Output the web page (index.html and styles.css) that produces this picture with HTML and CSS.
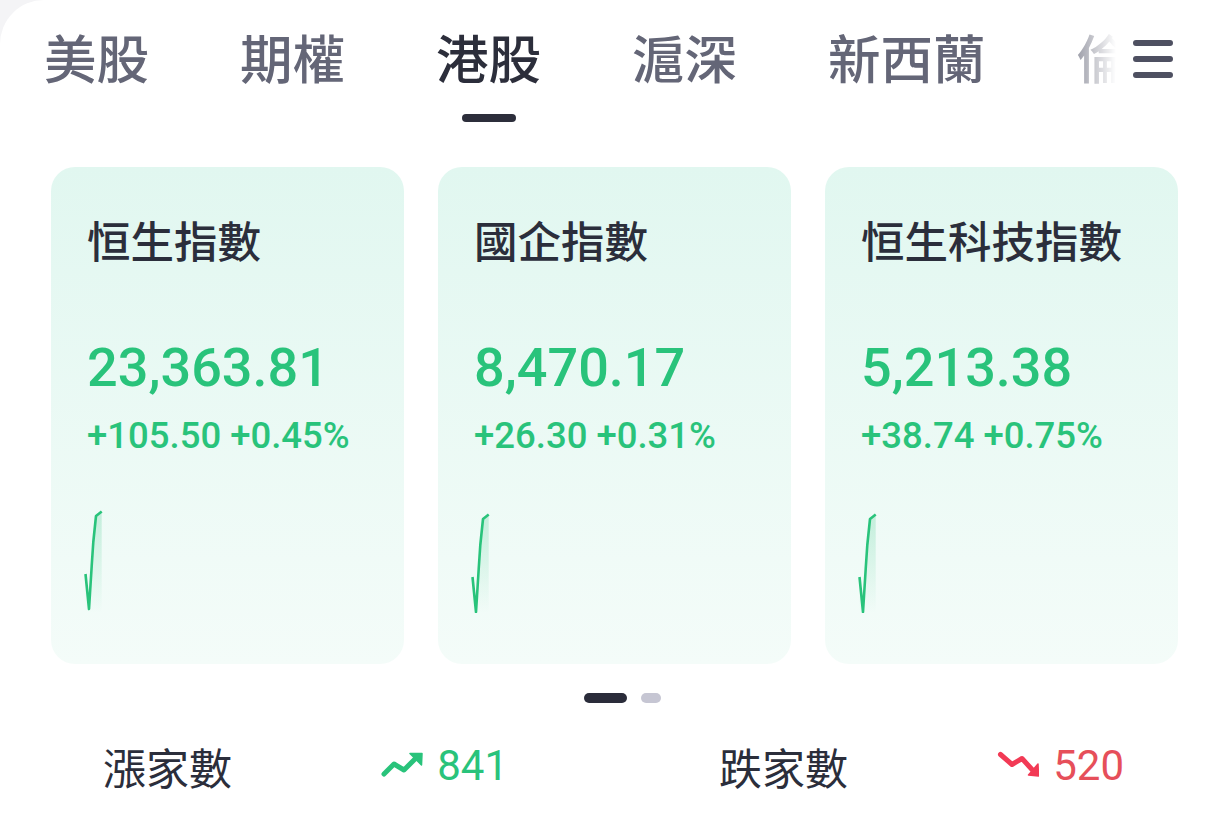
FILE: index.html
```html
<!DOCTYPE html>
<html lang="zh-Hant">
<head>
  <meta charset="UTF-8">
  <meta name="viewport" content="width=device-width, initial-scale=1.0">
  <title>港股</title>
  <link rel="stylesheet" href="styles.css">
</head>
<body>
  <div class="page">

    <div class="tab-bar">
      <div class="tab-list">
        <div class="tab">美股</div>
        <div class="tab">期權</div>
        <div class="tab active">港股<span class="tab-indicator"></span></div>
        <div class="tab">滬深</div>
        <div class="tab">新西蘭</div>
        <div class="tab">倫敦</div>
      </div>
      <button class="menu-btn">
        <svg width="42" height="40" viewBox="0 0 42 40">
          <path d="M4 4H38M4 20H38M4 36H38" stroke="#4e5061" stroke-width="6" stroke-linecap="round" fill="none"/>
        </svg>
      </button>
    </div>

    <!-- 指數卡片 -->
    <div class="cards">
      <div class="card">
        <div class="card-title">恒生指數</div>
        <div class="card-value">23,363.81</div>
        <div class="card-change">+105.50 +0.45%</div>
        <svg class="spark" width="280" height="104" viewBox="0 0 280 104">
          <defs>
            <linearGradient id="sparkFill1" x1="0" y1="0" x2="0" y2="1">
              <stop offset="0" stop-color="#29c37b" stop-opacity="0.22"/>
              <stop offset="1" stop-color="#29c37b" stop-opacity="0"/>
            </linearGradient>
          </defs>
          <path d="M1.5 65L5 100L7.7 57L9.3 33L12 7L17.7 2.5L17.7 104L1.5 104Z" fill="url(#sparkFill1)"/>
          <path d="M1.5 65L5 100L7.7 57L9.3 33L12 7L17.7 2.5" stroke="#29c37b" stroke-width="2.6" fill="none" stroke-linejoin="round"/>
        </svg>
      </div>

      <div class="card">
        <div class="card-title">國企指數</div>
        <div class="card-value">8,470.17</div>
        <div class="card-change">+26.30 +0.31%</div>
        <svg class="spark" width="280" height="104" viewBox="0 0 280 104">
          <defs>
            <linearGradient id="sparkFill2" x1="0" y1="0" x2="0" y2="1">
              <stop offset="0" stop-color="#29c37b" stop-opacity="0.22"/>
              <stop offset="1" stop-color="#29c37b" stop-opacity="0"/>
            </linearGradient>
          </defs>
          <path d="M1.5 68L5 103L7.7 60L9.3 36L12 10L17.7 5.5L17.7 104L1.5 104Z" fill="url(#sparkFill2)"/>
          <path d="M1.5 68L5 103L7.7 60L9.3 36L12 10L17.7 5.5" stroke="#29c37b" stroke-width="2.6" fill="none" stroke-linejoin="round"/>
        </svg>
      </div>

      <div class="card">
        <div class="card-title">恒生科技指數</div>
        <div class="card-value">5,213.38</div>
        <div class="card-change">+38.74 +0.75%</div>
        <svg class="spark" width="280" height="104" viewBox="0 0 280 104">
          <defs>
            <linearGradient id="sparkFill3" x1="0" y1="0" x2="0" y2="1">
              <stop offset="0" stop-color="#29c37b" stop-opacity="0.22"/>
              <stop offset="1" stop-color="#29c37b" stop-opacity="0"/>
            </linearGradient>
          </defs>
          <path d="M1.5 68L5 103L7.7 60L9.3 36L12 10L17.7 5.5L17.7 104L1.5 104Z" fill="url(#sparkFill3)"/>
          <path d="M1.5 68L5 103L7.7 60L9.3 36L12 10L17.7 5.5" stroke="#29c37b" stroke-width="2.6" fill="none" stroke-linejoin="round"/>
        </svg>
      </div>
    </div>

    <div class="dots">
      <span class="dot current"></span>
      <span class="dot"></span>
    </div>

    <!-- 漲跌家數 -->
    <div class="stats">
      <div class="stat">
        <span class="stat-label">漲家數</span>
        <span class="stat-value up">
          <svg width="42" height="30" viewBox="0 0 42 30">
            <path d="M3 23L13 13L23 19L34 8" stroke="#29c37b" stroke-width="5" stroke-linecap="round" stroke-linejoin="round" fill="none"/>
            <path d="M29 2.5L41 2.5L40.5 14Z" fill="#29c37b" stroke="#29c37b" stroke-width="1.5" stroke-linejoin="round"/>
          </svg>
          841
        </span>
      </div>
      <div class="stat">
        <span class="stat-label">跌家數</span>
        <span class="stat-value down">
          <svg width="42" height="30" viewBox="0 0 42 30">
            <path d="M3.5 3.5L15 13.5L25 7.5L35 18.5" stroke="#f23a55" stroke-width="5" stroke-linecap="round" stroke-linejoin="round" fill="none"/>
            <path d="M31.5 24L41.5 25L41 13Z" fill="#f23a55" stroke="#f23a55" stroke-width="1.5" stroke-linejoin="round"/>
          </svg>
          520
        </span>
      </div>
    </div>

  </div>
</body>
</html>
```

FILE: styles.css
```css
* {
  box-sizing: border-box;
}

body {
  margin: 0;
  background-color: #f4f4f6;
  font-family: Roboto, "Noto Sans CJK TC", sans-serif;
  color: #2b2e3b;
}

.page {
  background-color: #fff;
  min-height: 827px;
  border-top-left-radius: 44px;
  overflow: hidden;
}

/* 市場分頁 */
.tab-bar {
  display: flex;
  align-items: flex-start;
  height: 122px;
  padding: 18px 39px 0 44px;
}

.tab-list {
  flex: 1;
  display: flex;
  align-items: flex-start;
  gap: 91px;
  overflow: hidden;
  -webkit-mask-image: linear-gradient(to right, #000 calc(100% - 66px), transparent calc(100% - 4px));
  mask-image: linear-gradient(to right, #000 calc(100% - 66px), transparent calc(100% - 4px));
}

.tab {
  display: flex;
  flex-direction: column;
  align-items: center;
  flex-shrink: 0;
  font-family: "Noto Sans CJK TC", sans-serif;
  font-size: 52.5px;
  line-height: 77px;
  font-weight: 500;
  color: #646677;
}

.tab.active {
  color: #2c2e3b;
}

.tab-indicator {
  width: 54px;
  height: 8px;
  margin-top: 19px;
  border-radius: 4px;
  background-color: #2c2e3b;
}

.menu-btn {
  width: 42px;
  height: 40px;
  margin: 21px 0 0 12px;
  padding: 0;
  border: none;
  background: none;
}

.menu-btn svg {
  display: block;
}

/* 指數卡片 */
.cards {
  display: flex;
  gap: 34px;
  margin-top: 45px;
  padding-left: 51px;
}

.card {
  flex: 0 0 353px;
  height: 497px;
  padding: 52px 0 0 36px;
  border-radius: 24px;
  background: linear-gradient(180deg, #e1f7f0 0%, #f4fcf9 100%);
  display: flex;
  flex-direction: column;
}

.card-title {
  font-family: "Noto Sans CJK TC", sans-serif;
  font-size: 43.5px;
  line-height: 42px;
  font-weight: 500;
  color: #2b2e3b;
}

.card-value {
  margin-top: 79px;
  font-size: 54px;
  line-height: 56px;
  font-weight: 500;
  color: #29c37b;
}

.card-change {
  margin-top: 22px;
  font-size: 36.5px;
  line-height: 35px;
  font-weight: 500;
  color: #29c37b;
}

.spark {
  display: block;
  margin: 56px 0 0 -3px;
}

/* 分頁點 */
.dots {
  display: flex;
  justify-content: center;
  gap: 14px;
  margin-top: 29px;
  padding-left: 32px;
}

.dot {
  width: 20px;
  height: 10px;
  border-radius: 5px;
  background-color: #c6c6d3;
}

.dot.current {
  width: 43px;
  background-color: #2a2c3a;
}

/* 漲跌家數 */
.stats {
  display: grid;
  grid-template-columns: 1fr 1fr;
  column-gap: 211px;
  margin-top: 39px;
  padding: 0 89px 0 103px;
}

.stat {
  display: flex;
  justify-content: space-between;
  align-items: center;
  height: 48px;
}

.stat-label {
  font-family: "Noto Sans CJK TC", sans-serif;
  font-size: 43px;
  line-height: 48px;
  color: #2b2e3b;
}

.stat-value {
  display: flex;
  align-items: center;
  gap: 14px;
  font-size: 42px;
  line-height: 48px;
}

.stat-value svg {
  display: block;
}

.stat-value.up {
  color: #29c37b;
}

.stat-value.down {
  color: #e64f5a;
}
```
